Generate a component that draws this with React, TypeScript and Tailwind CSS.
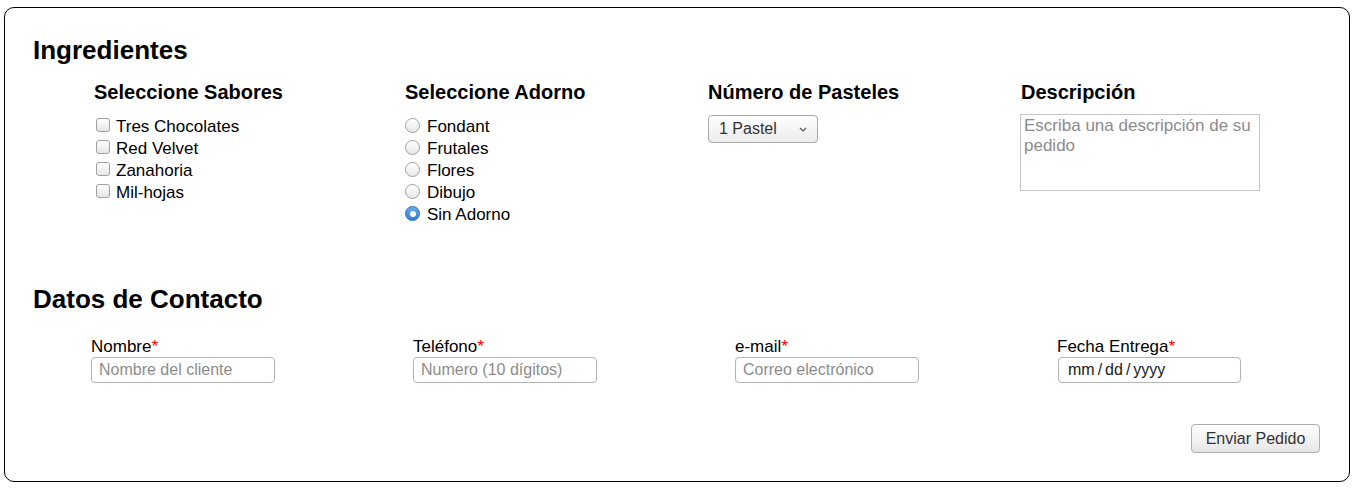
import React from "react";

const font = { fontFamily: '"Liberation Sans", Arial, sans-serif' };

function Check({ label }: { label: string }) {
  return (
    <div className="flex items-start h-[22px] leading-[22px] text-[17px] text-black">
      <span className="mt-[2px] ml-[2px] w-[14px] h-[14px] shrink-0 rounded-[3px] border border-[#a0a0a0] bg-gradient-to-b from-white to-[#e6e6e6]" />
      <span className="ml-[6px]">{label}</span>
    </div>
  );
}

function Radio({ label, checked }: { label: string; checked?: boolean }) {
  return (
    <div className="flex items-start h-[22px] leading-[22px] text-[17px] text-black">
      {checked ? (
        <span className="mt-[2px] w-[15px] h-[15px] shrink-0 rounded-full border border-[#2a6fbf] bg-gradient-to-b from-[#6aaae8] to-[#2f7dcf] flex items-center justify-center">
          <span className="w-[6px] h-[6px] rounded-full bg-white" />
        </span>
      ) : (
        <span className="mt-[2px] w-[15px] h-[15px] shrink-0 rounded-full border border-[#a0a0a0] bg-gradient-to-b from-white to-[#e8e8e8]" />
      )}
      <span className="ml-[7px]">{label}</span>
    </div>
  );
}

function Field({ label, children }: { label: string; children: React.ReactNode }) {
  return (
    <div className="w-[322px] shrink-0">
      <div className="text-[17px] leading-[19px] text-black">
        {label}
        <span className="text-[#ff0000]">*</span>
      </div>
      {children}
    </div>
  );
}

function TextInput({ placeholder }: { placeholder: string }) {
  return (
    <input
      type="text"
      readOnly
      placeholder={placeholder}
      className="mt-[1px] block w-[184px] h-[26px] rounded-[4px] border border-[#b3b3b3] bg-white text-[16px] outline-none pl-[7px] placeholder:text-[#8c8c8c]"
    />
  );
}

export default function App() {
  return (
    <div style={font} className="pt-[7px] pl-[4px] bg-white min-h-[490px]">
      <div className="w-[1346px] h-[475px] border border-black rounded-[10px] pl-[28px] pr-[29px] pt-[27px] flex flex-col">
        <h2 className="text-[26px] leading-[30px] font-bold text-black">Ingredientes</h2>

        <div className="mt-[16px] ml-[61px] flex">
          <div className="w-[311px] shrink-0">
            <h3 className="text-[20px] leading-[23px] font-bold text-black">Seleccione Sabores</h3>
            <div className="mt-[12px]">
              <Check label="Tres Chocolates" />
              <Check label="Red Velvet" />
              <Check label="Zanahoria" />
              <Check label="Mil-hojas" />
            </div>
          </div>
          <div className="w-[303px] shrink-0">
            <h3 className="text-[20px] leading-[23px] font-bold text-black">Seleccione Adorno</h3>
            <div className="mt-[12px]">
              <Radio label="Fondant" />
              <Radio label="Frutales" />
              <Radio label="Flores" />
              <Radio label="Dibujo" />
              <Radio label="Sin Adorno" checked />
            </div>
          </div>
          <div className="w-[313px] shrink-0">
            <h3 className="text-[20px] leading-[23px] font-bold text-black">Número de Pasteles</h3>
            <div className="mt-[11px] w-[110px] h-[28px] rounded-[4px] border border-[#aaaaaa] bg-gradient-to-b from-white to-[#ebebeb] flex items-center pl-[10px] pr-[10px] text-[16px] text-[#333333]">
              <span className="flex-1">1 Pastel</span>
              <svg width="8" height="5" viewBox="0 0 8 5" fill="none">
                <path d="M1 1l3 3 3-3" stroke="#555" strokeWidth="1.2" />
              </svg>
            </div>
          </div>
          <div className="shrink-0">
            <h3 className="text-[20px] leading-[23px] font-bold text-black">Descripción</h3>
            <textarea
              readOnly
              placeholder="Escriba una descripción de su pedido"
              className="mt-[10px] -ml-[1px] block w-[240px] h-[77px] border border-[#c4c4c4] bg-white text-[17px] leading-[20px] px-[3px] pt-[1px] resize-none outline-none placeholder:text-[#8c8c8c]"
            />
          </div>
        </div>

        <h2 className="mt-[58px] text-[26px] leading-[30px] font-bold text-black">Datos de Contacto</h2>

        <div className="mt-[23px] ml-[58px] flex">
          <Field label="Nombre">
            <TextInput placeholder="Nombre del cliente" />
          </Field>
          <Field label="Teléfono">
            <TextInput placeholder="Numero (10 dígitos)" />
          </Field>
          <Field label="e-mail">
            <TextInput placeholder="Correo electrónico" />
          </Field>
          <Field label="Fecha Entrega">
            <div className="mt-[1px] ml-[1px] w-[183px] h-[26px] rounded-[4px] border border-[#b3b3b3] bg-white text-[16px] text-[#1a1a1a] pl-[9px] flex items-center">
              <span>mm</span>
              <span className="mx-[3px]">/</span>
              <span>dd</span>
              <span className="mx-[3px]">/</span>
              <span>yyyy</span>
            </div>
          </Field>
        </div>

        <div className="mt-[41px] flex justify-end">
          <div className="w-[129px] h-[29px] rounded-[4px] border border-[#adadad] bg-gradient-to-b from-white to-[#e6e6e6] flex items-center justify-center text-[16px] text-[#333333]">
            Enviar Pedido
          </div>
        </div>
      </div>
    </div>
  );
}
